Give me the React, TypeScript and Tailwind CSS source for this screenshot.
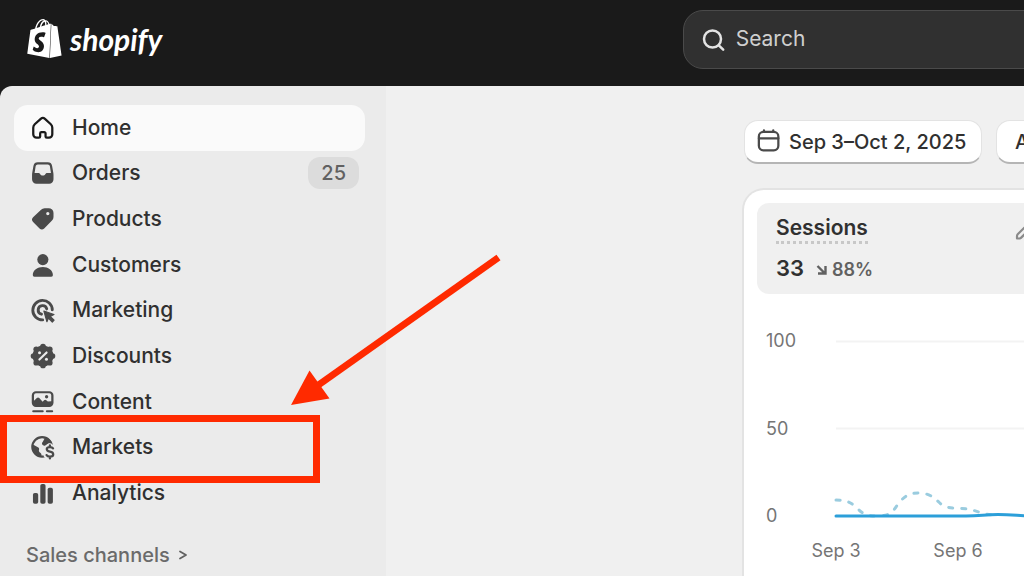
import React from 'react';
import { SiShopify } from 'react-icons/si';

const HomeIcon = () => (
  <svg viewBox="0 0 20 20" className="size-[30px] shrink-0 text-[#1a1a1a]" fill="none" stroke="currentColor" strokeWidth="1.5" strokeLinejoin="round">
    <path d="M8.5 3.9a2.1 2.1 0 0 1 2.8 0l3.9 3.6a3.1 3.1 0 0 1 1 2.3v4.4a2.2 2.2 0 0 1-2.2 2.2h-1.5a.8.8 0 0 1-.8-.8v-1.9a.9.9 0 0 0-.9-.9H9a.9.9 0 0 0-.9.9v1.9a.8.8 0 0 1-.8.8H5.7a2.2 2.2 0 0 1-2.2-2.2V9.8a3.1 3.1 0 0 1 1-2.3z" />
  </svg>
);

const OrdersIcon = () => (
  <svg viewBox="0 0 20 20" className="size-[30px] shrink-0" fill="currentColor">
    <path
      fillRule="evenodd"
      d="M6.5 2.8a2.9 2.9 0 0 0-2.85 2.3l-.8 4.5q-.15.9-.15 1.8v2.8a2.9 2.9 0 0 0 2.9 2.9h8.5a2.9 2.9 0 0 0 2.9-2.9v-2.8q0-.9-.15-1.8l-.8-4.5a2.9 2.9 0 0 0-2.85-2.3zm0 1.5h6.7a1.4 1.4 0 0 1 1.38 1.1l.72 4.6h-2.5c-.7 0-1.1.4-1.4 1-.3.5-.7.7-1.55.7s-1.25-.2-1.55-.7c-.3-.6-.7-1-1.4-1H4.4l.72-4.6a1.4 1.4 0 0 1 1.38-1.1z"
    />
  </svg>
);

const ProductsIcon = () => (
  <svg viewBox="0 0 20 20" className="size-[30px] shrink-0" fill="currentColor">
    <path
      fillRule="evenodd"
      d="M11.2 2.8h2.6a3.2 3.2 0 0 1 3.2 3.2v2.6a3.4 3.4 0 0 1-1 2.4l-5.2 5.3a2.2 2.2 0 0 1-3.1 0l-4.3-4.3a2.2 2.2 0 0 1 0-3.1l5.3-5.1a3.4 3.4 0 0 1 2.5-1zM13.2 7.5a1.1 1.1 0 1 0 0-2.2 1.1 1.1 0 0 0 0 2.2z"
    />
  </svg>
);

const CustomersIcon = () => (
  <svg viewBox="0 0 20 20" className="size-[30px] shrink-0" fill="currentColor">
    <circle cx="9.9" cy="6.4" r="3.7" />
    <path d="M3.2 16.6c0-3.2 3.2-5.3 6.7-5.3s6.7 2.1 6.7 5.3a1.1 1.1 0 0 1-1.1 1.2H4.3a1.1 1.1 0 0 1-1.1-1.2z" />
  </svg>
);

const MarketingIcon = () => (
  <svg viewBox="0 0 20 20" className="size-[30px] shrink-0" fill="none" stroke="currentColor" strokeLinecap="round">
    <path strokeWidth="1.9" d="M16.2 9.9a6.5 6.5 0 1 0-6.4 6.7" />
    <path strokeWidth="1.9" d="M12.5 9.3a2.9 2.9 0 1 0-3.5 3.5" />
    <path fill="currentColor" strokeWidth=".8" strokeLinejoin="round" d="M10.6 10.7l6.7 2.3-2.5 1.3 2.6 2.5-1.2 1.2-2.6-2.6-1 2.4z" />
  </svg>
);

const DiscountsIcon = () => (
  <svg viewBox="0 0 20 20" className="size-[30px] shrink-0" fill="currentColor">
    <circle cx="10" cy="10" r="7" />
    <circle cx="10" cy="3.7" r="1.9" />
    <circle cx="14.5" cy="5.5" r="1.9" />
    <circle cx="16.3" cy="10" r="1.9" />
    <circle cx="14.5" cy="14.5" r="1.9" />
    <circle cx="10" cy="16.3" r="1.9" />
    <circle cx="5.5" cy="14.5" r="1.9" />
    <circle cx="3.7" cy="10" r="1.9" />
    <circle cx="5.5" cy="5.5" r="1.9" />
    <path stroke="#ebebeb" strokeWidth="1.4" strokeLinecap="round" d="M12.4 7.6l-4.8 4.8" />
    <circle cx="7.7" cy="7.9" r="1" fill="#ebebeb" />
    <circle cx="12.3" cy="12.1" r="1" fill="#ebebeb" />
  </svg>
);

const ContentIcon = () => (
  <svg viewBox="0 0 20 20" className="size-[30px] shrink-0" fill="currentColor">
    <path
      fillRule="evenodd"
      d="M5.3 2.8h8.9A2.8 2.8 0 0 1 17 5.6v4.9a2.8 2.8 0 0 1-2.8 2.8H5.3a2.8 2.8 0 0 1-2.8-2.8V5.6a2.8 2.8 0 0 1 2.8-2.8zm0 1.4A1.3 1.3 0 0 0 4 5.5v3.6l1.9-1.7a1.1 1.1 0 0 1 1.6 0l2.3 2.4.9-.9a1.1 1.1 0 0 1 1.5 0l1 .7 2.3-.1V5.5a1.3 1.3 0 0 0-1.3-1.3z"
    />
    <circle cx="12.4" cy="6.5" r="1.1" />
    <path fill="none" stroke="currentColor" strokeWidth="1.4" strokeLinecap="round" d="M3.5 16.2h6.3M12.6 16.2h3.5" />
  </svg>
);

const MarketsIcon = () => (
  <svg viewBox="0 0 20 20" className="size-[30px] shrink-0" fill="none">
    <circle cx="9.4" cy="9.9" r="6.5" stroke="currentColor" strokeWidth="1.5" />
    <path fill="currentColor" d="M3 8.2l3.6 1.9c.9.5 1 1.1.7 1.9-.2.8.2 1.3.9 1.8.8.6.9 1.3.7 2.7-3.4-.1-6-3-6.2-6.4z" />
    <path fill="currentColor" d="M11.6 3.3c2.2.7 3.9 2.1 4.6 4.3l-2.2.1c-.9 0-1.3.5-1.9 1.1-.7.7-1.7.5-2.3-.1-.7-.7-.6-1.5.1-2.2z" />
    <path stroke="#ebebeb" strokeWidth="4" strokeLinecap="round" d="M16.4 10.9c-.4-.6-1-.9-1.8-.9-3 0-2.8 2.6-.1 3.1 3 .5 2.9 3.3 0 3.3-1 0-1.8-.3-2.2-1M14.6 17.5V9.500" />
    <path
      stroke="currentColor"
      strokeWidth="1.5"
      strokeLinecap="round"
      d="M16.7 10.9c-.4-.6-1.1-.9-2-.9-3 0-2.8 2.6-.1 3.1 3 .5 2.9 3.3 0 3.3-1 0-1.8-.3-2.2-1M14.6 8.9V10M14.6 16.5v1.1"
    />
  </svg>
);

const AnalyticsIcon = () => (
  <svg viewBox="0 0 20 20" className="size-[30px] shrink-0" fill="currentColor">
    <rect x="3.3" y="10" width="3.5" height="7.2" rx="1.2" />
    <rect x="8.2" y="4" width="3.5" height="13.2" rx="1.2" />
    <rect x="13.1" y="6.5" width="3.5" height="10.7" rx="1.2" />
  </svg>
);

const CalendarIcon = () => (
  <svg viewBox="0 0 20 20" className="size-[30px] shrink-0" fill="none" stroke="#4a4a4a" strokeWidth="1.5" strokeLinecap="round">
    <rect x="3.9" y="3.3" width="13" height="12.2" rx="3" />
    <path d="M7.3 2.2v1M13.5 2.2v1M3.9 7.5h13" />
  </svg>
);

interface NavItem {
  label: string;
  icon: React.FC;
  badge?: string;
  active?: boolean;
}

const navItems: NavItem[] = [
  { label: 'Home', icon: HomeIcon, active: true },
  { label: 'Orders', icon: OrdersIcon, badge: '25' },
  { label: 'Products', icon: ProductsIcon },
  { label: 'Customers', icon: CustomersIcon },
  { label: 'Marketing', icon: MarketingIcon },
  { label: 'Discounts', icon: DiscountsIcon },
  { label: 'Content', icon: ContentIcon },
  { label: 'Markets', icon: MarketsIcon },
  { label: 'Analytics', icon: AnalyticsIcon },
];

const Header: React.FC = () => (
  <header className="grid h-[86px] shrink-0 grid-cols-[minmax(0,2fr)_minmax(0,1fr)] overflow-hidden bg-[#1a1a1a]">
    <a href="#" className="flex items-start gap-1.5 pt-[19px] pl-[25px] text-white">
      <SiShopify className="size-[39px]" aria-hidden="true" />
      <span className="font-['Liberation_Sans_Narrow',Lato,sans-serif] text-[30px] leading-10 font-bold italic">shopify</span>
    </a>
    <label className="mt-2.5 -mr-8 flex h-[59px] items-center gap-2 rounded-[20px] border border-[#4a4a4a] bg-[#303030] pl-4">
      <svg viewBox="0 0 28 28" className="size-7 shrink-0" fill="none" stroke="#e3e3e3" strokeWidth="2.5" strokeLinecap="round">
        <circle cx="12.5" cy="13" r="8.5" />
        <path d="M18.8 19.3l4.4 4.4" />
      </svg>
      <input
        type="search"
        aria-label="Search"
        placeholder="Search"
        className="min-w-0 flex-1 bg-transparent pb-0.5 text-[21px] leading-7 outline-none placeholder:text-[#cfcfcf]"
      />
    </label>
  </header>
);

const Sidebar: React.FC = () => (
  <aside className="w-[386px] shrink-0 bg-[#ebebeb] pt-[19px] pr-[21px] pl-3.5">
    <nav>
      <ul className="grid h-[411px] grid-rows-9">
        {navItems.map(({ label, icon: Icon, badge, active }) => (
          <li key={label} className="flex">
            <a
              href="#"
              className={`flex flex-1 items-center gap-3.5 rounded-[14px] pr-1.5 pl-3.5 text-[21px] leading-7 font-medium text-[#303030] ${
                active ? 'bg-[#fafafa]' : ''
              }`}
            >
              <span className="text-[#4a4a4a]">
                <Icon />
              </span>
              {label}
              {badge && (
                <span className="ml-auto rounded-xl bg-[#dcdcdc] px-[13px] py-0.5 text-[20px] leading-7 text-[#616161]">{badge}</span>
              )}
            </a>
          </li>
        ))}
      </ul>
      <button type="button" className="mt-[25px] flex items-center gap-2 pl-3 text-[20px] leading-7 font-medium text-[#6a6a6a]">
        Sales channels
        <svg viewBox="0 0 12 12" className="size-3" fill="none" stroke="#616161" strokeWidth="1.8" strokeLinecap="round" strokeLinejoin="round">
          <path d="M2 2.5l6 3.5-6 3.5" />
        </svg>
      </button>
    </nav>
  </aside>
);

const SessionsChart: React.FC = () => (
  <div className="mt-[35px]">
    <div className="flex h-[199px]">
      <div className="flex w-[79px] shrink-0 flex-col justify-between pl-[9px] text-[18px] leading-6 text-[#757575]">
        <span>100</span>
        <span>50</span>
        <span>0</span>
      </div>
      <svg width="220" height="199" viewBox="0 0 220 199" className="shrink-0 overflow-visible" fill="none" role="img" aria-label="Sessions over time">
        <path d="M0 12.5h220M0 99.5h220" stroke="#f3f3f3" strokeWidth="2" />
        <path
          d="M0 171C10 171 15 173 22 180 27 185 31 187 40 187 56 187 57 182 62 175 69 166 75 164 82 164 96 164 100 171 106 176 112 180 124 179 132 180 142 182 148 186 158 186"
          stroke="#9accdf"
          strokeWidth="3"
          strokeDasharray="4 9"
          strokeLinecap="round"
        />
        <path d="M0 187H130C145 187 148 185.5 162 185.5 178 185.5 184 187 200 187H220" stroke="#2c9fd9" strokeWidth="3" strokeLinecap="round" />
      </svg>
    </div>
    <div className="mt-[11px] flex pl-[18px] text-center text-[18px] leading-6 text-[#757575]">
      <span className="w-[122px] shrink-0">Sep 3</span>
      <span className="w-[122px] shrink-0">Sep 6</span>
    </div>
  </div>
);

const Dashboard: React.FC = () => (
  <main className="flex min-w-0 flex-1 justify-end overflow-hidden bg-[#f0f0f0]">
    <div className="w-[280px] shrink-0 pt-[34px]">
      <div className="flex gap-3.5 text-[20px] leading-7 font-medium whitespace-nowrap text-[#303030]">
        <button type="button" className="flex h-11 w-[238px] shrink-0 items-center gap-1.5 rounded-[14px] border border-b-2 border-[#e3e3e3] border-b-[#b5b5b5] bg-white pl-2">
          <CalendarIcon />
          Sep 3–Oct 2, 2025
        </button>
        <button type="button" className="h-11 w-40 shrink-0 rounded-[14px] border border-b-2 border-[#e3e3e3] border-b-[#b5b5b5] bg-white pl-4.5 text-left">
          All channels
        </button>
      </div>

      <section className="mt-[26px] -mr-8 h-[440px] rounded-tl-[20px] bg-white p-[13px] shadow-[0_0_0_2px_#e3e3e3]">
        <div className="flex h-[91px] rounded-xl bg-[#f0f0f0] pt-3 pl-[19px] text-[21px] leading-7 font-semibold text-[#303030]">
          <div>
            <h2 className="w-fit border-b-3 border-dotted border-[#c8c8c8] leading-[26px]">Sessions</h2>
            <p className="mt-2 flex items-center gap-3 text-[22px]">
              33
              <span className="flex items-center gap-1 pt-1 text-[18px] text-[#616161]">
                <svg viewBox="0 0 12 12" className="size-3" fill="none" stroke="currentColor" strokeWidth="2.4">
                  <path d="M1.5 2l7 7M9.5 2v7.5H2" />
                </svg>
                88%
              </span>
            </p>
          </div>
          <button type="button" aria-label="Edit metric" className="mt-1.5 mr-1 ml-auto h-6">
            <svg viewBox="0 0 24 24" className="size-6" fill="none" stroke="#8a8a8a" strokeWidth="2.2" strokeLinejoin="round">
              <path d="M2 17.5v-2.5q0-1 .7-1.7L12.5 3.5a2.4 2.4 0 0 1 3.5 3.5L6.2 16.6q-.7.7-1.7.9z" />
            </svg>
          </button>
        </div>
        <SessionsChart />
      </section>
    </div>
  </main>
);

// red frame and arrow pointing at the Markets entry
const MarketsCallout: React.FC = () => (
  <div className="pointer-events-none absolute inset-0 overflow-hidden" aria-hidden="true">
    <div className="absolute top-[329px] left-0 h-[68px] w-80 border-7 border-[#ff2a00]" />
    <svg width="212" height="154" viewBox="0 0 212 154" className="absolute top-[167px] left-[290px]" fill="#ff2a00">
      <path d="M208.5 90.5L208.5 90.5M208.5 4.5L27 133" stroke="#ff2a00" strokeWidth="7" />
      <path d="M1 152L19.500 117.500 39.500 145.500z" />
    </svg>
  </div>
);

const App: React.FC = () => {
  return (
    <div className="flex h-screen flex-col overflow-hidden bg-[#1a1a1a] font-[Inter,sans-serif]">
      <Header />
      <div className="relative flex min-h-0 flex-1 overflow-hidden rounded-tl-xl">
        <Sidebar />
        <Dashboard />
        <MarketsCallout />
      </div>
    </div>
  );
};

export default App;
